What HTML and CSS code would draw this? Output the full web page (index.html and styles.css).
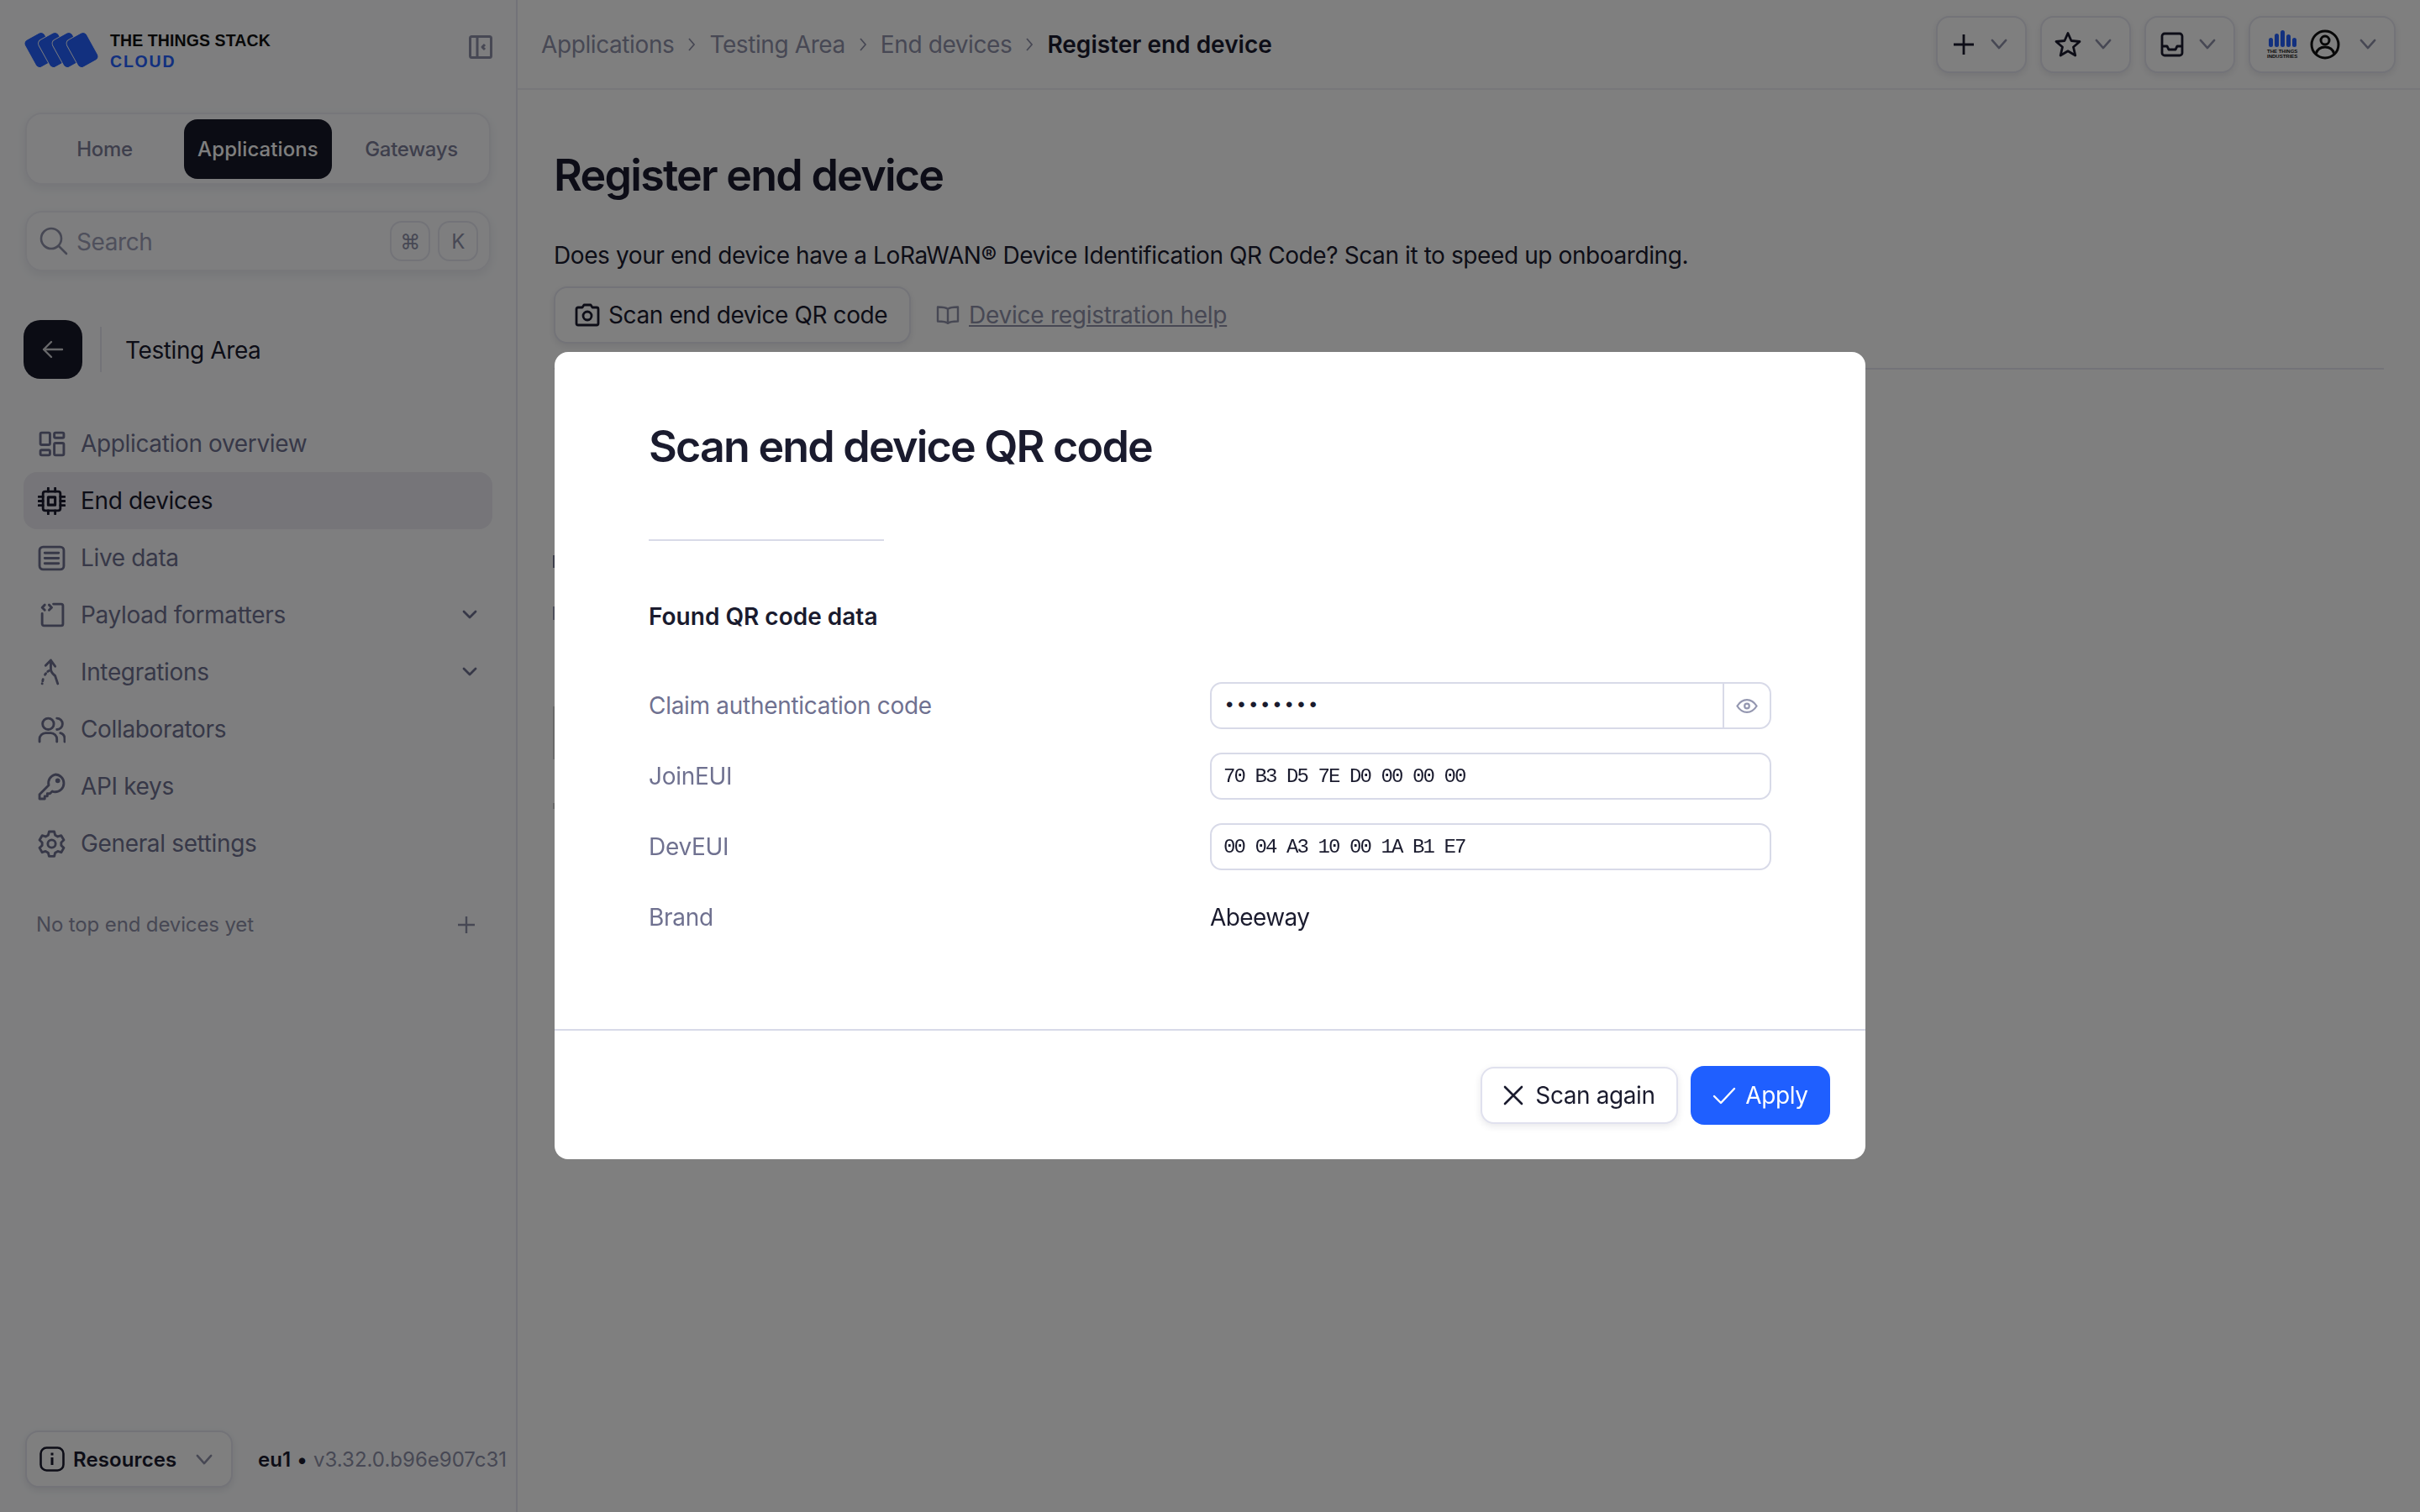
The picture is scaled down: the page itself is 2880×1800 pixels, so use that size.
FILE: index.html
```html
<!DOCTYPE html>
<html lang="en">
<head>
    <meta charset="UTF-8">
    <title>Register end device</title>
    <link rel="stylesheet" href="styles.css">
</head>
<body>

    <aside class="sidebar">
        <div class="brand">
            <svg class="brand-logo" viewBox="0 0 90 45" fill="#2460ff" stroke="#fff" stroke-width=".9">
                <rect x="6.500" y="4" width="27" height="37" rx="5" transform="rotate(-29 20 22.500)"/>
                <rect x="23" y="4" width="27" height="37" rx="5" transform="rotate(-29 36.500 22.500)"/>
                <rect x="39.500" y="4" width="27" height="37" rx="5" transform="rotate(-29 53 22.500)"/>
                <rect x="56.500" y="4" width="27" height="37" rx="5" transform="rotate(-29 70 22.500)"/>
            </svg>
            <div class="brand-name">
                <span>THE THINGS STACK</span>
                <span class="brand-cloud">CLOUD</span>
            </div>
            <svg class="collapse-icon" viewBox="0 0 28 28" fill="none" stroke="#8e90a8" stroke-width="3" stroke-linejoin="round">
                <rect x="1.500" y="1.500" width="25" height="25" rx="2"/>
                <path d="M10 2v24M19 11l-3 3 3 3"/>
            </svg>
        </div>

        <nav class="tabs">
            <a class="tab tab-home">Home</a>
            <a class="tab tab-active">Applications</a>
            <a class="tab tab-gateways">Gateways</a>
        </nav>

        <div class="search">
            <svg class="search-icon" viewBox="0 0 34 34" fill="none" stroke="#8e90a8" stroke-width="2.600" stroke-linecap="round">
                <circle cx="14" cy="14" r="12"/>
                <path d="M23 23l9 9"/>
            </svg>
            <span class="search-text">Search</span>
            <span class="kbd">⌘</span>
            <span class="kbd">K</span>
        </div>

        <div class="app-head">
            <button class="back-btn">
                <svg viewBox="0 0 26 22" width="26" height="22" fill="none" stroke="#fff" stroke-opacity=".8" stroke-width="2.400" stroke-linecap="round" stroke-linejoin="round">
                    <path d="M24 11H2M11 2l-9 9 9 9"/>
                </svg>
            </button>
            <span class="app-name">Testing Area</span>
        </div>

        <ul class="menu">
            <li class="menu-item">
                <svg class="menu-icon" viewBox="0 0 32 32"><rect x="3" y="3" width="11" height="14" rx="1.500"/><rect x="19" y="3" width="11" height="6" rx="1.500"/><rect x="3" y="23" width="11" height="6" rx="1.500"/><rect x="19" y="15" width="11" height="14" rx="1.500"/></svg>
                Application overview
            </li>
            <li class="menu-item menu-active">
                <svg class="menu-icon" viewBox="0 0 32 32"><rect x="6" y="5" width="20" height="22" rx="2.500"/><rect x="12" y="11.500" width="8" height="9" stroke-width="3"/><path d="M1 11h5M1 16h5M1 21h5M26 11h5M26 16h5M26 21h5M12 1v4M20 1v4M12 27v4M20 27v4"/></svg>
                End devices
            </li>
            <li class="menu-item">
                <svg class="menu-icon" viewBox="0 0 32 32"><rect x="2" y="3" width="28" height="26" rx="4"/><path d="M8 10h16M8 16h16M8 22h16"/></svg>
                Live data
            </li>
            <li class="menu-item">
                <svg class="menu-icon" viewBox="0 0 32 32"><path d="M18 3h9a2 2 0 0 1 2 2v21a2 2 0 0 1-2 2H7a2 2 0 0 1-2-2V14M8 4L5 7l3 3M13 4l3 3-3 3"/></svg>
                Payload formatters
                <svg class="chevron menu-chevron" viewBox="0 0 18 12"><path d="M2 2l7 7 7-7"/></svg>
            </li>
            <li class="menu-item">
                <svg class="menu-icon" viewBox="0 0 32 32"><path d="M9 8l6-6 5 7M15 2v10c0 4 3 6 5 8l3 9"/><path d="M13 14c-2 1-4 3-6 7M6 24l-1 5" stroke-dasharray="2 3"/></svg>
                Integrations
                <svg class="chevron menu-chevron" viewBox="0 0 18 12"><path d="M2 2l7 7 7-7"/></svg>
            </li>
            <li class="menu-item">
                <svg class="menu-icon" viewBox="0 0 32 32"><circle cx="12" cy="9.500" r="6.500"/><path d="M2 30v-3a7 7 0 0 1 7-7h6a7 7 0 0 1 7 7v3M22 3a6.500 6.500 0 0 1 0 13M26 20a7 7 0 0 1 5 7v3"/></svg>
                Collaborators
            </li>
            <li class="menu-item">
                <svg class="menu-icon" viewBox="0 0 32 32"><path d="M20 2a10 10 0 0 1 0 20c-1.200 0-2.300-.2-3.300-.6L14 24h-3v3H8v3H2v-5l10.600-10.700A10 10 0 0 1 20 2z"/><circle cx="23" cy="9" r="1.400"/></svg>
                API keys
            </li>
            <li class="menu-item">
                <svg class="menu-icon" viewBox="0 0 32 32"><circle cx="16" cy="16" r="4.500"/><path d="M13 2h6l1 4 3 1.700 4-1.200 3 5.200-3 2.800v3.400l3 2.800-3 5.200-4-1.200-3 1.700-1 4h-6l-1-4-3-1.700-4 1.200-3-5.200 3-2.800v-3.400l-3-2.800 3-5.200 4 1.200L12 6z"/></svg>
                General settings
            </li>
        </ul>

        <div class="top-items">
            <span>No top end devices yet</span>
            <svg class="plus-small" viewBox="0 0 22 22"><path d="M11 1v20M1 11h20"/></svg>
        </div>

        <div class="side-foot">
            <button class="btn-resources">
                <svg viewBox="0 0 30 30" width="30" height="30" fill="none" stroke="#1a1b2e" stroke-width="2.600">
                    <rect x="1.500" y="1.500" width="27" height="27" rx="7"/>
                    <path d="M15 13v9" stroke-width="3"/>
                    <path d="M15 7.500v3" stroke-width="3"/>
                </svg>
                Resources
                <svg class="chevron" viewBox="0 0 22 14"><path d="M2 2l9 10 9-10"/></svg>
            </button>
            <span class="version"><b>eu1</b> <i>•</i> v3.32.0.b96e907c31</span>
        </div>
    </aside>

    <div class="main">
        <header class="topbar">
            <div class="crumbs">
                <a>Applications</a>
                <svg class="crumb-sep" viewBox="0 0 10 18"><path d="M2 2l6 7-6 7"/></svg>
                <a>Testing Area</a>
                <svg class="crumb-sep" viewBox="0 0 10 18"><path d="M2 2l6 7-6 7"/></svg>
                <a>End devices</a>
                <svg class="crumb-sep" viewBox="0 0 10 18"><path d="M2 2l6 7-6 7"/></svg>
                <b>Register end device</b>
            </div>
            <div class="top-actions">
                <button class="top-btn">
                    <svg class="top-icon" viewBox="0 0 32 32"><path d="M16 4v24M4 16h24"/></svg>
                    <svg class="chevron" viewBox="0 0 22 14"><path d="M2 2l9 10 9-10"/></svg>
                </button>
                <button class="top-btn">
                    <svg class="top-icon" viewBox="0 0 32 32"><path d="M16 2.500l4 9 10 1-7.500 6.500 2.300 10L16 23.800 7.200 29l2.300-10L2 12.500l10-1z"/></svg>
                    <svg class="chevron" viewBox="0 0 22 14"><path d="M2 2l9 10 9-10"/></svg>
                </button>
                <button class="top-btn">
                    <svg class="top-icon" viewBox="0 0 32 32"><rect x="4" y="3" width="24" height="26" rx="3"/><path d="M4 18h6l2 4h8l2-4h6"/></svg>
                    <svg class="chevron" viewBox="0 0 22 14"><path d="M2 2l9 10 9-10"/></svg>
                </button>
                <button class="top-btn top-btn-user">
                    <span class="org-logo">
                        <svg viewBox="0 0 33 20" width="33" height="20" fill="#2460ff">
                            <rect x="0" y="9" width="5" height="11" rx="2.500"/>
                            <rect x="7" y="4" width="5" height="16" rx="2.500"/>
                            <rect x="14" y="0" width="5" height="20" rx="2.500"/>
                            <rect x="21" y="5" width="5" height="15" rx="2.500"/>
                            <rect x="28" y="9" width="5" height="11" rx="2.500"/>
                        </svg>
                        <span>THE THINGS<br>INDUSTRIES</span>
                    </span>
                    <svg class="user-icon" viewBox="0 0 36 36" fill="none" stroke="#111" stroke-width="3">
                        <circle cx="18" cy="18" r="16"/>
                        <circle cx="18" cy="13" r="5"/>
                        <path d="M7 29c2-6 6-8 11-8s9 2 11 8"/>
                    </svg>
                    <svg class="chevron" viewBox="0 0 22 14"><path d="M2 2l9 10 9-10"/></svg>
                </button>
            </div>
        </header>

        <main class="content">
            <h1>Register end device</h1>
            <p class="intro">Does your end device have a LoRaWAN® Device Identification QR Code? Scan it to speed up onboarding.</p>
            <div class="intro-actions">
                <button class="btn-scan">
                    <svg viewBox="0 0 30 28" width="30" height="28" fill="none" stroke="#1a1b2e" stroke-width="2.800" stroke-linejoin="round">
                        <path d="M9 5l2-3h8l2 3h5a2 2 0 0 1 2 2v17a2 2 0 0 1-2 2H4a2 2 0 0 1-2-2V7a2 2 0 0 1 2-2z"/>
                        <circle cx="15" cy="15" r="5"/>
                    </svg>
                    Scan end device QR code
                </button>
                <a class="help-link">
                    <svg viewBox="0 0 28 22" width="28" height="22" fill="none" stroke="#8e90a8" stroke-width="2.400" stroke-linejoin="round">
                        <path d="M14 4C12 2 8 1.500 2 1.500v17c6 0 10 .5 12 2.500 2-2 6-2.500 12-2.500v-17C20 1.500 16 2 14 4zM14 4v17"/>
                    </svg>
                    <span>Device registration help</span>
                </a>
            </div>
            <div class="content-rule"></div>
            <!-- form under the dialog, only its left edge shows -->
            <div class="form-stubs">
                <div class="stub stub-a"></div>
                <div class="stub stub-b"></div>
                <div class="stub stub-c"></div>
                <div class="stub stub-d"></div>
            </div>
        </main>
    </div>

    <div class="backdrop">
        <section class="modal">
            <div class="modal-body">
                <h2>Scan end device QR code</h2>
                <div class="modal-rule"></div>
                <h3>Found QR code data</h3>
                <div class="field">
                    <label>Claim authentication code</label>
                    <div class="input input-secret">
                        <span class="dots">••••••••</span>
                        <span class="eye">
                            <svg viewBox="0 0 28 20" width="26" height="19" fill="none" stroke="#9497b0" stroke-width="2.400" stroke-linejoin="round">
                                <path d="M1.500 10C5 4.500 9 2 14 2s9 2.500 12.500 8C23 15.500 19 18 14 18S5 15.500 1.500 10z"/>
                                <circle cx="14" cy="10" r="3"/>
                            </svg>
                        </span>
                    </div>
                </div>
                <div class="field">
                    <label>JoinEUI</label>
                    <div class="input">70 B3 D5 7E D0 00 00 00</div>
                </div>
                <div class="field">
                    <label>DevEUI</label>
                    <div class="input">00 04 A3 10 00 1A B1 E7</div>
                </div>
                <div class="field">
                    <label>Brand</label>
                    <span class="field-value">Abeeway</span>
                </div>
            </div>
            <footer class="modal-foot">
                <button class="btn-again">
                    <svg viewBox="0 0 24 24" width="24" height="24" fill="none" stroke="#1a1b2e" stroke-width="2.600" stroke-linecap="round"><path d="M2 2l20 20M22 2L2 22"/></svg>
                    Scan again
                </button>
                <button class="btn-apply">
                    <svg viewBox="0 0 28 22" width="28" height="22" fill="none" stroke="#fff" stroke-width="2.400" stroke-linecap="round" stroke-linejoin="round"><path d="M2 12l8 8L26 3"/></svg>
                    Apply
                </button>
            </footer>
        </section>
    </div>

</body>
</html>
```
FILE: styles.css
```css
* {
    box-sizing: border-box;
}
html, body {
    height: 100%;
}
body {
    margin: 0;
    display: flex;
    font-family: 'Inter', 'Liberation Sans', sans-serif;
    font-size: 28px;
    letter-spacing: -.4px;
    color: #1a1b2e;
    background-color: #fff;
    overflow: hidden;
}
button {
    font-family: inherit;
    letter-spacing: inherit;
    color: inherit;
    cursor: pointer;
}
ul {
    list-style: none;
    margin: 0;
    padding: 0;
}

/* sidebar */
.sidebar {
    width: 616px;
    height: 1800px;
    flex-shrink: 0;
    display: flex;
    flex-direction: column;
    padding: 0 30px 29px 28px;
    background-color: #fcfdff;
    border-right: 2px solid #e6e7f0;
}
.brand {
    height: 134px;
    display: flex;
    align-items: flex-start;
    padding-top: 37px;
}
.brand-logo {
    width: 90px;
    height: 45px;
    flex-shrink: 0;
}
.brand-name {
    display: flex;
    flex-direction: column;
    margin: -1px 0 0 13px;
    font-family: 'Liberation Sans', sans-serif;
    font-weight: 700;
    font-size: 19.500px;
    line-height: 25px;
    letter-spacing: .1px;
    color: #111;
}
.brand-cloud {
    color: #2460ff;
    letter-spacing: 1.800px;
}
.collapse-icon {
    width: 28px;
    height: 28px;
    margin: 5px -2px 0 auto;
}

.tabs {
    height: 86px;
    margin-left: 2px;
    display: flex;
    align-items: center;
    padding: 0 8px;
    border: 2px solid #eeeef5;
    border-radius: 20px;
    box-shadow: 0 4px 12px rgba(30, 30, 60, .08);
}
.tab {
    flex: 1;
    text-align: center;
    font-size: 24px;
    font-weight: 500;
    letter-spacing: -.3px;
    color: #7c7e99;
}
.tab-home {
    padding-right: 10px;
}
.tab-gateways {
    padding-left: 10px;
}
.tab-active {
    flex: 0 0 176px;
    height: 71px;
    line-height: 71px;
    border-radius: 16px;
    letter-spacing: .1px;
    color: #fff;
    background-color: #171828;
}

.search {
    height: 72px;
    margin: 31px 0 0 2px;
    display: flex;
    align-items: center;
    padding: 0 13px 0 15px;
    border: 2px solid #eeeef5;
    border-radius: 20px;
    box-shadow: 0 4px 12px rgba(30, 30, 60, .08);
    color: #9ea0b8;
}
.search-icon {
    width: 34px;
    height: 34px;
}
.search-text {
    margin: 2px auto 0 10px;
}
.kbd {
    width: 48px;
    height: 48px;
    margin-left: 9px;
    display: flex;
    align-items: center;
    justify-content: center;
    font-size: 24px;
    border: 2px solid #e6e7f0;
    border-radius: 14px;
    color: #8e90a8;
}

.app-head {
    height: 70px;
    margin-top: 58px;
    display: flex;
    align-items: center;
}
.back-btn {
    width: 70px;
    height: 70px;
    display: flex;
    align-items: center;
    justify-content: center;
    border: none;
    border-radius: 20px;
    background-color: #171828;
}
.app-name {
    height: 54px;
    line-height: 56px;
    margin-left: 21px;
    padding-left: 28px;
    border-left: 2px solid #e6e7f0;
}

.menu {
    margin-top: 43px;
}
.menu-item {
    height: 68px;
    margin-right: -2px;
    display: flex;
    align-items: center;
    gap: 18px;
    padding: 0 18px 0 17px;
    border-radius: 16px;
    color: #6f7190;
    letter-spacing: -.35px;
}
.menu-active {
    color: #1a1b2e;
    background-color: #ecebf2;
}
.menu-icon {
    width: 33px;
    height: 33px;
    flex-shrink: 0;
    fill: none;
    stroke: currentColor;
    stroke-width: 2.800;
    stroke-linejoin: round;
    stroke-linecap: round;
}
.chevron {
    width: 20px;
    height: 13px;
    flex-shrink: 0;
    fill: none;
    stroke: #8e90a8;
    stroke-width: 2.800;
    stroke-linecap: round;
    stroke-linejoin: round;
}
.menu-chevron {
    width: 18px;
    height: 12px;
    margin-left: auto;
    stroke: #6f7190;
}

.top-items {
    margin-top: 48px;
    padding: 0 18px 0 15px;
    display: flex;
    align-items: center;
    justify-content: space-between;
    font-size: 24px;
    color: #8e90a8;
    letter-spacing: -.13px;
}
.plus-small {
    width: 22px;
    height: 22px;
    fill: none;
    stroke: #8e90a8;
    stroke-width: 2.400;
}

.side-foot {
    margin-top: auto;
    display: flex;
    align-items: center;
    margin-left: 2px;
    font-size: 24px;
    letter-spacing: 0;
}
.btn-resources {
    width: 247px;
    height: 68px;
    flex-shrink: 0;
    display: flex;
    align-items: center;
    gap: 10px;
    padding: 0 0 0 15px;
    font-size: 24px;
    font-weight: 600;
    letter-spacing: .1px;
    background-color: #fff;
    border: 2px solid #e6e7f0;
    border-radius: 16px;
    box-shadow: 0 3px 8px rgba(30, 30, 60, .1);
}
.btn-resources .chevron {
    margin-left: 13px;
}
.version {
    margin-left: 30px;
    white-space: nowrap;
    color: #8e90a8;
}
.version b {
    font-weight: 600;
    color: #1a1b2e;
}
.version i {
    font-style: normal;
    color: #1a1b2e;
}

/* top bar */
.main {
    flex: 1;
    min-width: 0;
    display: flex;
    flex-direction: column;
}
.topbar {
    height: 107px;
    display: flex;
    align-items: center;
    justify-content: space-between;
    padding: 0 29px 0 28px;
    border-bottom: 2px solid #eeeef5;
}
.crumbs {
    display: flex;
    align-items: center;
    gap: 16px;
    color: #8e90a8;
}
.crumbs b {
    font-weight: 600;
    letter-spacing: 0;
    color: #1a1b2e;
}
.crumb-sep {
    width: 10px;
    height: 18px;
    fill: none;
    stroke: #8e90a8;
    stroke-width: 1.800;
}
.top-actions {
    display: flex;
    gap: 16px;
}
.top-btn {
    width: 108px;
    height: 68px;
    display: flex;
    align-items: center;
    justify-content: space-between;
    padding: 0 21px 0 15px;
    background-color: #fff;
    border: 2px solid #e6e7f0;
    border-radius: 16px;
    box-shadow: 0 3px 8px rgba(30, 30, 60, .1);
}
.top-btn-user {
    width: 175px;
    padding-left: 20px;
}
.top-icon {
    width: 32px;
    height: 32px;
    fill: none;
    stroke: #1a1b2e;
    stroke-width: 2.800;
    stroke-linejoin: round;
}
.org-logo {
    display: flex;
    flex-direction: column;
    align-items: center;
    gap: 2px;
    font-family: 'Liberation Sans', sans-serif;
    font-size: 6px;
    font-weight: 700;
    line-height: 6px;
    letter-spacing: 0;
    color: #111;
    text-align: center;
}
.user-icon {
    width: 36px;
    height: 36px;
    margin-left: 15px;
    margin-right: auto;
}

/* page content, sits behind the dialog */
.content {
    padding: 72px 43px 0;
}
h1 {
    margin: 0;
    font-size: 52px;
    line-height: 60px;
    font-weight: 600;
    letter-spacing: -1.750px;
}
.intro {
    margin: 45px 0 0;
    line-height: 40px;
}
.intro-actions {
    margin-top: 17px;
    display: flex;
    align-items: center;
}
.btn-scan {
    height: 68px;
    width: 425px;
    display: flex;
    align-items: center;
    gap: 10px;
    padding: 0 0 0 23px;
    font-size: 28px;
    background-color: #fff;
    border: 2px solid #e6e7f0;
    border-radius: 16px;
    box-shadow: 0 3px 8px rgba(30, 30, 60, .1);
}
.help-link {
    display: flex;
    align-items: center;
    gap: 11px;
    margin-left: 30px;
    letter-spacing: -.25px;
    color: #8e90a8;
}
.help-link span {
    text-decoration: underline;
}
.content-rule {
    height: 2px;
    margin-top: 29px;
    background-color: #e6e7f0;
}
.form-stubs {
    margin-left: -1px;
    padding-top: 221px;
}
.stub {
    width: 2px;
}
.stub-a {
    height: 15px;
    background-color: #7c7e99;
}
.stub-b {
    height: 16px;
    margin-top: 46px;
    background-color: #9ea0b8;
}
.stub-c {
    height: 63px;
    margin-top: 103px;
    background-color: #d2d2d2;
}
.stub-d {
    height: 7px;
    margin-top: 52px;
    background-color: #cfcfcf;
}

/* dialog */
.backdrop {
    position: fixed;
    inset: 0;
    display: flex;
    align-items: center;
    justify-content: center;
    background-color: rgba(0, 0, 0, .5);
}
.modal {
    width: 1560px;
    height: 961px;
    margin-bottom: 1px;
    display: flex;
    flex-direction: column;
    background-color: #fff;
    border-radius: 16px;
}
.modal-body {
    flex: 1;
    padding: 83px 112px 0;
}
h2 {
    margin: 0;
    font-size: 52px;
    line-height: 60px;
    font-weight: 600;
    letter-spacing: -1.800px;
}
.modal-rule {
    width: 280px;
    height: 2px;
    margin-top: 80px;
    background-color: #d8dae8;
}
h3 {
    margin: 72px 0 0;
    font-size: 28px;
    line-height: 36px;
    font-weight: 600;
    letter-spacing: 0;
}
.field {
    height: 84px;
    display: flex;
    align-items: center;
    color: #6f7190;
    letter-spacing: -.3px;
}
h3 + .field {
    margin-top: 46px;
}
.field label {
    width: 668px;
    flex-shrink: 0;
}
.input {
    flex: 1;
    height: 56px;
    display: flex;
    align-items: center;
    padding-left: 14px;
    font-family: 'Liberation Mono', monospace;
    font-size: 24px;
    letter-spacing: -1.900px;
    color: #1a1b2e;
    border: 2px solid #d8dae8;
    border-radius: 14px;
}
.input-secret {
    justify-content: space-between;
    padding-right: 0;
}
.dots {
    font-size: 24px;
    letter-spacing: -.2px;
}
.eye {
    width: 56px;
    height: 100%;
    display: flex;
    align-items: center;
    justify-content: center;
    border-left: 2px solid #d8dae8;
}
.field-value {
    letter-spacing: -.6px;
    color: #1a1b2e;
}
.modal-foot {
    height: 155px;
    display: flex;
    align-items: center;
    justify-content: flex-end;
    gap: 15px;
    padding: 0 42px 0 0;
    border-top: 2px solid #d8dae8;
}
.btn-again {
    width: 235px;
    height: 68px;
    display: flex;
    align-items: center;
    justify-content: center;
    gap: 14px;
    font-size: 28px;
    background-color: #fff;
    border: 2px solid #e0e1ee;
    border-radius: 16px;
    box-shadow: 0 3px 8px rgba(30, 30, 60, .1);
}
.btn-apply {
    width: 166px;
    height: 70px;
    display: flex;
    align-items: center;
    justify-content: center;
    gap: 11px;
    font-size: 28px;
    color: #fff;
    background-color: #1f5fff;
    border: none;
    border-radius: 16px;
}
```
